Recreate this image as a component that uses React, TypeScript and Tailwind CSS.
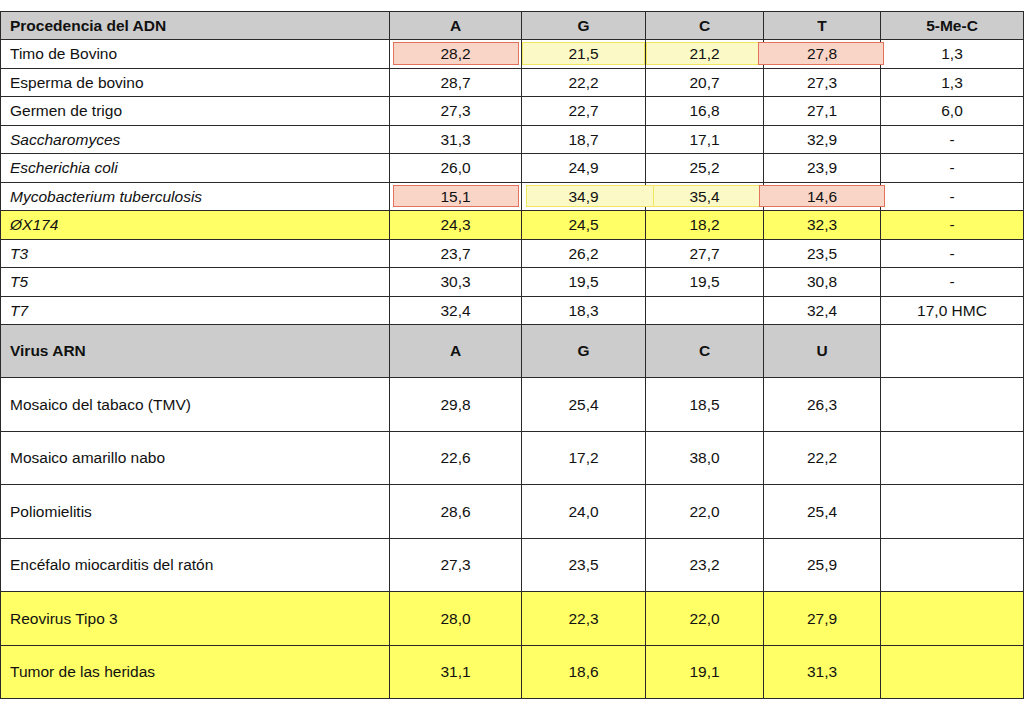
import React from 'react';

type Mark = { kind: 'red' | 'yel'; cls: string };

const dna: { name: string; italic?: boolean; vals: string[]; yellow?: boolean; marks?: (Mark | null)[] }[] = [
  {
    name: 'Timo de Bovino',
    vals: ['28,2', '21,5', '21,2', '27,8', '1,3'],
    marks: [
      { kind: 'red', cls: 'left-[3px] right-[2px] top-[2px] bottom-[3px]' },
      { kind: 'yel', cls: 'left-[0px] right-[0px] top-[2px] bottom-[3px]' },
      { kind: 'yel', cls: 'left-[0px] right-[2px] top-[2px] bottom-[3px]' },
      { kind: 'red', cls: 'left-[-6px] right-[-4px] top-[2px] bottom-[3px]' },
      null,
    ],
  },
  { name: 'Esperma de bovino', vals: ['28,7', '22,2', '20,7', '27,3', '1,3'] },
  { name: 'Germen de trigo', vals: ['27,3', '22,7', '16,8', '27,1', '6,0'] },
  { name: 'Saccharomyces', italic: true, vals: ['31,3', '18,7', '17,1', '32,9', '-'] },
  { name: 'Escherichia coli', italic: true, vals: ['26,0', '24,9', '25,2', '23,9', '-'] },
  {
    name: 'Mycobacterium tuberculosis',
    italic: true,
    vals: ['15,1', '34,9', '35,4', '14,6', '-'],
    marks: [
      { kind: 'red', cls: 'left-[3px] right-[2px] top-[2px] bottom-[3px]' },
      { kind: 'yel', cls: 'left-[4px] right-[-10px] top-[2px] bottom-[3px]' },
      { kind: 'yel', cls: 'left-[7px] right-[-2px] top-[2px] bottom-[3px]' },
      { kind: 'red', cls: 'left-[-5px] right-[-5px] top-[2px] bottom-[3px]' },
      null,
    ],
  },
  { name: 'ØX174', italic: true, yellow: true, vals: ['24,3', '24,5', '18,2', '32,3', '-'] },
  { name: 'T3', italic: true, vals: ['23,7', '26,2', '27,7', '23,5', '-'] },
  { name: 'T5', italic: true, vals: ['30,3', '19,5', '19,5', '30,8', '-'] },
  { name: 'T7', italic: true, vals: ['32,4', '18,3', '', '32,4', '17,0 HMC'] },
];

const rna: { name: string; vals: string[]; yellow?: boolean }[] = [
  { name: 'Mosaico del tabaco (TMV)', vals: ['29,8', '25,4', '18,5', '26,3'] },
  { name: 'Mosaico amarillo nabo', vals: ['22,6', '17,2', '38,0', '22,2'] },
  { name: 'Poliomielitis', vals: ['28,6', '24,0', '22,0', '25,4'] },
  { name: 'Encéfalo miocarditis del ratón', vals: ['27,3', '23,5', '23,2', '25,9'] },
  { name: 'Reovirus Tipo 3', yellow: true, vals: ['28,0', '22,3', '22,0', '27,9'] },
  { name: 'Tumor de las heridas', yellow: true, vals: ['31,1', '18,6', '19,1', '31,3'] },
];

const cell = 'border-[1.5px] border-[#2a2a2a] p-0';

export default function App() {
  return (
    <div className="w-[1024px] h-[709px] bg-white pt-[11px] text-[15.5px] text-[#111111]" style={{ fontFamily: '"Liberation Sans", Arial, sans-serif' }}>
      <table className="border-collapse table-fixed w-[1023px]">
        <colgroup>
          <col className="w-[389px]" />
          <col className="w-[132px]" />
          <col className="w-[124px]" />
          <col className="w-[118px]" />
          <col className="w-[117px]" />
          <col className="w-[143px]" />
        </colgroup>
        <tbody>
          <tr className="h-[28px] bg-[#cccccc] font-bold">
            <td className={`${cell} pl-[9px] text-left`}>Procedencia del ADN</td>
            {['A', 'G', 'C', 'T', '5-Me-C'].map((h) => (
              <td key={h} className={`${cell} text-center`}>{h}</td>
            ))}
          </tr>
          {dna.map((r) => (
            <tr key={r.name} className={`h-[28.5px] ${r.yellow ? 'bg-[#ffff66]' : 'bg-white'}`}>
              <td className={`${cell} pl-[9px] text-left ${r.italic ? 'italic' : ''}`}>{r.name}</td>
              {r.vals.map((v, i) => {
                const m = r.marks?.[i];
                return (
                  <td key={i} className={`${cell} text-center relative`}>
                    {m && (
                      <div
                        className={`absolute ${m.cls} ${
                          m.kind === 'red'
                            ? 'bg-[#f9d5c8] border-[1.5px] border-[#e2725c]'
                            : 'bg-[#fbf9c6] border-[1.5px] border-[#f0e660]'
                        }`}
                      />
                    )}
                    <span className="relative">{v}</span>
                  </td>
                );
              })}
            </tr>
          ))}
          <tr className="h-[53px] bg-[#cccccc] font-bold">
            <td className={`${cell} pl-[9px] text-left`}>Virus ARN</td>
            {['A', 'G', 'C', 'U'].map((h) => (
              <td key={h} className={`${cell} text-center`}>{h}</td>
            ))}
            <td className={`${cell} bg-white`} />
          </tr>
          {rna.map((r) => (
            <tr key={r.name} className={`h-[53.5px] ${r.yellow ? 'bg-[#ffff66]' : 'bg-white'}`}>
              <td className={`${cell} pl-[9px] text-left`}>{r.name}</td>
              {r.vals.map((v, i) => (
                <td key={i} className={`${cell} text-center`}>{v}</td>
              ))}
              <td className={cell} />
            </tr>
          ))}
        </tbody>
      </table>
    </div>
  );
}
